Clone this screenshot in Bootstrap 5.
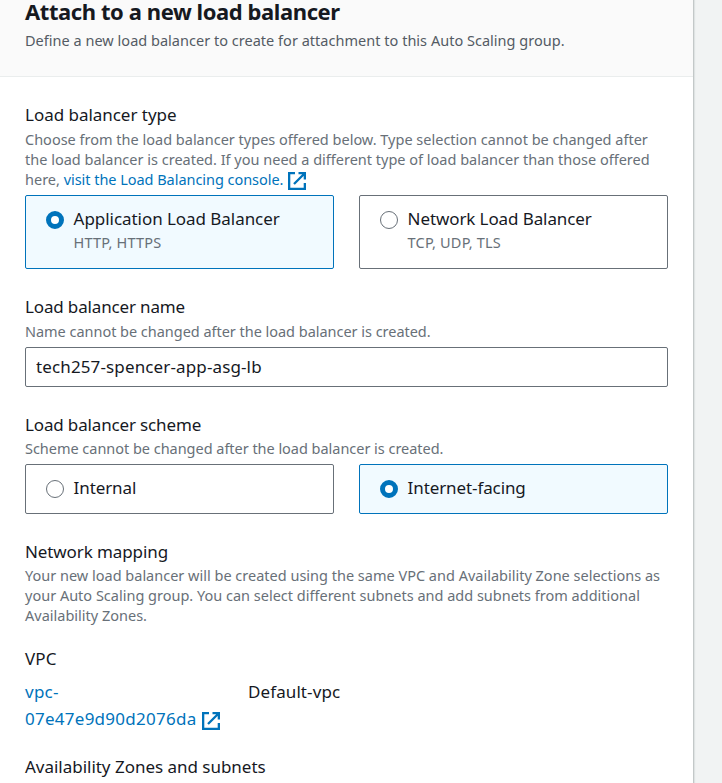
<!DOCTYPE html>
<html lang="en">
<head>
<meta charset="utf-8">
<meta name="viewport" content="width=device-width, initial-scale=1">
<title>Attach to a new load balancer</title>
<link href="https://cdn.jsdelivr.net/npm/bootstrap@5.3.0/dist/css/bootstrap.min.css" rel="stylesheet">
<style>
html, body { height: 783px; overflow: hidden; }
body { background: #f1f3f3; color: #16191f; font-family: "Noto Sans", "Open Sans", sans-serif; font-size: 17px; line-height: 27px; letter-spacing: -.1px; }
.panel { width: 694px; height: 783px; background: #fff; border-right: 1px solid #c3c8c8; box-shadow: 1px 0 1px #dfe3e3; }
.panel-top { height: 77px; background: #fafafa; border-bottom: 1px solid #eaeded; padding: 0 25px; }
.panel-title { font-size: 22px; line-height: 22px; font-weight: 700; margin: 0; letter-spacing: -.42px; }
.hint { font-size: 14.5px; line-height: 20px; color: #687078; letter-spacing: 0; }
.panel-top .hint { color: #545b64; margin-top: 8px; letter-spacing: .02px; }
.panel-main { padding: 24px 25px 0; }
.block { margin-bottom: 24px; }
.block-type .hint, .block-name .hint { margin-top: 1px; }
.block-type .lbl { letter-spacing: -.03px; }
.block-name .lbl, .block-scheme .lbl { letter-spacing: -.15px; }
.block-name .hint, .block-scheme .hint { letter-spacing: -.03px; }
.block-map { margin-bottom: 20px; }
.block-vpc { margin-bottom: 21px; letter-spacing: .1px; }
.block-az { letter-spacing: -.02px; }
.lbl { display: block; }
.choices { display: grid; grid-template-columns: 1fr 1fr; gap: 25px; margin-top: 6px; }
.choice { border: 1px solid #687078; border-radius: 2px; padding: 9px 19px 12px 19.6px; gap: 10px; }
.block-type .choice { padding-bottom: 16px; }
.block-type .choice .hint { margin-top: 0; letter-spacing: .2px; }
.block-type .on { letter-spacing: -.05px; }
.choice.on { border-color: #0073bb; background: #f1faff; }
.dot { width: 18px; height: 18px; border: 1.25px solid #687078; border-radius: 50%; margin-top: 6px; background: #fff; flex: none; }
.on .dot { border: 5.5px solid #0073bb; }
.field { height: 40px; border: 1px solid #687078; border-radius: 2px; padding: 0 10px 2px; margin-top: 6px; color: #16191f; font-size: 17px; letter-spacing: .13px; }
.lnk { color: #0073bb; text-decoration: none; }
.block-type .lnk { letter-spacing: -.04px; }
.ext { width: 18px; height: 18px; fill: none; stroke: #0073bb; stroke-width: 2.3; margin: -4px 0 -4px 1px; vertical-align: -1px; }
.vals { display: grid; grid-template-columns: 198px 1fr; column-gap: 25px; margin-top: 6px; }
.vals .lnk { letter-spacing: .26px; }
</style>
</head>
<body>
<main class="panel">
  <header class="panel-top">
    <h1 class="panel-title">Attach to a new load balancer</h1>
    <div class="hint">Define a new load balancer to create for attachment to this Auto Scaling group.</div>
  </header>
  <div class="panel-main">
    <section class="block block-type">
      <div class="lbl">Load balancer type</div>
      <div class="hint">Choose from the load balancer types offered below. Type selection cannot be changed after<br>the load balancer is created. If you need a different type of load balancer than those offered<br>here, <a class="lnk" href="#">visit the Load Balancing console. <svg class="ext" viewBox="0 0 18 18"><path d="M7 1.15H1.15v15.7h15.7V11M10.5 1.15h6.35v6.4M16.5 1.5L6 12"/></svg></a></div>
      <div class="choices">
        <label class="choice on d-flex"><i class="dot"></i><div>Application Load Balancer<div class="hint">HTTP, HTTPS</div></div></label>
        <label class="choice d-flex"><i class="dot"></i><div>Network Load Balancer<div class="hint">TCP, UDP, TLS</div></div></label>
      </div>
    </section>
    <section class="block block-name">
      <label class="lbl" for="lb">Load balancer name</label>
      <div class="hint">Name cannot be changed after the load balancer is created.</div>
      <input id="lb" class="field w-100 d-block" value="tech257-spencer-app-asg-lb">
    </section>
    <section class="block block-scheme">
      <div class="lbl">Load balancer scheme</div>
      <div class="hint">Scheme cannot be changed after the load balancer is created.</div>
      <div class="choices">
        <label class="choice d-flex"><i class="dot"></i><div>Internal</div></label>
        <label class="choice on d-flex"><i class="dot"></i><div>Internet-facing</div></label>
      </div>
    </section>
    <section class="block block-map">
      <div class="lbl">Network mapping</div>
      <div class="hint">Your new load balancer will be created using the same VPC and Availability Zone selections as<br>your Auto Scaling group. You can select different subnets and add subnets from additional<br>Availability Zones.</div>
    </section>
    <section class="block block-vpc">
      <div class="lbl">VPC</div>
      <div class="vals">
        <a class="lnk" href="#">vpc-<br>07e47e9d90d2076da <svg class="ext" viewBox="0 0 18 18"><path d="M7 1.15H1.15v15.7h15.7V11M10.5 1.15h6.35v6.4M16.5 1.5L6 12"/></svg></a>
        <div>Default-vpc</div>
      </div>
    </section>
    <section class="block-az"><div class="lbl">Availability Zones and subnets</div></section>
  </div>
</main>
<script src="https://cdn.jsdelivr.net/npm/bootstrap@5.3.0/dist/js/bootstrap.bundle.min.js"></script>
</body>
</html>
